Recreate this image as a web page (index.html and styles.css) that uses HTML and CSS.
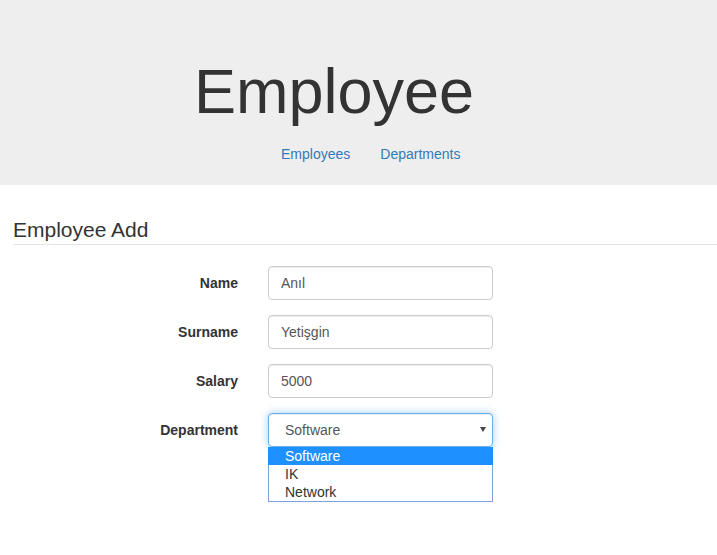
FILE: index.html
```html
<!DOCTYPE html>
<html>
<head>
<meta charset="utf-8">
<title>Employee</title>
<link rel="stylesheet" href="styles.css">
</head>
<body>
<header class="jumbotron">
  <h1 class="title">Employee</h1>
  <nav class="nav">
    <a href="#">Employees</a>
    <a href="#">Departments</a>
  </nav>
</header>
<main class="content">
  <h2 class="legend">Employee Add</h2>
  <form class="form">
    <div class="form-group">
      <label class="control-label">Name</label>
      <input class="form-control" type="text" value="Anıl">
    </div>
    <div class="form-group">
      <label class="control-label">Surname</label>
      <input class="form-control" type="text" value="Yetişgin">
    </div>
    <div class="form-group">
      <label class="control-label">Salary</label>
      <input class="form-control" type="text" value="5000">
    </div>
    <div class="form-group">
      <label class="control-label">Department</label>
      <div class="select-wrap">
        <div class="form-control select-box focused">Software</div>
        <span class="caret"></span>
        <div class="option-list">
          <div class="option-item option-active">Software</div>
          <div class="option-item">IK</div>
          <div class="option-item">Network</div>
        </div>
      </div>
    </div>
  </form>
</main>
</body>
</html>
```

FILE: styles.css
```css
* { box-sizing: border-box; }
html, body {
  margin: 0;
  padding: 0;
  background: #fff;
  font-family: "Liberation Sans", Arial, sans-serif;
  font-size: 14px;
  color: #333;
}
.jumbotron {
  background: #eeeeee;
  height: 185px;
  padding-top: 57px;
  overflow: hidden;
}
.title {
  margin: 0 0 0 194px;
  font-size: 63px;
  font-weight: 400;
  line-height: 69px;
  color: #333;
}
.nav {
  display: flex;
  gap: 30px;
  margin: 18px 0 0 281px;
  line-height: 20px;
}
.nav a {
  color: #337ab7;
  text-decoration: none;
  font-size: 14px;
}
.content {
  padding-top: 30px;
  padding-bottom: 80px;
}
.legend {
  margin: 0 0 21px 13px;
  font-size: 21px;
  font-weight: 400;
  line-height: 29px;
  color: #333;
  border-bottom: 1px solid #e5e5e5;
}
.form {
  display: flex;
  flex-direction: column;
  gap: 15px;
}
.form-group {
  display: flex;
  align-items: center;
  height: 34px;
}
.control-label {
  width: 238px;
  margin-right: 30px;
  text-align: right;
  font-weight: 700;
  font-size: 14px;
  color: #333;
}
.form-control {
  display: block;
  width: 225px;
  height: 34px;
  padding: 6px 12px;
  font-family: "Liberation Sans", Arial, sans-serif;
  font-size: 14px;
  line-height: 20px;
  color: #555;
  background: #fff;
  border: 1px solid #ccc;
  border-radius: 4px;
  box-shadow: inset 0 1px 1px rgba(0,0,0,.075);
  outline: none;
}
.select-wrap {
  position: relative;
  width: 225px;
  height: 34px;
}
.select-box {
  padding-left: 16px;
}
.focused {
  border-color: #66afe9;
  box-shadow: inset 0 1px 1px rgba(0,0,0,.075), 0 0 8px rgba(102,175,233,.6);
}
.caret {
  position: absolute;
  right: 7px;
  top: 14px;
  width: 0;
  height: 0;
  border-left: 3.5px solid transparent;
  border-right: 3.5px solid transparent;
  border-top: 5px solid #444;
}
.option-list {
  position: absolute;
  z-index: 10;
  left: 0;
  top: 34px;
  width: 225px;
  background: #fff;
  border: 1px solid #7da2d9;
  border-top: none;
}
.option-item {
  height: 18px;
  line-height: 18px;
  padding-left: 16px;
  font-size: 14px;
  color: #333;
}
.option-active {
  background: #1e90ff;
  color: #fff;
  margin: 0 -1px;
  padding-left: 17px;
}
```
